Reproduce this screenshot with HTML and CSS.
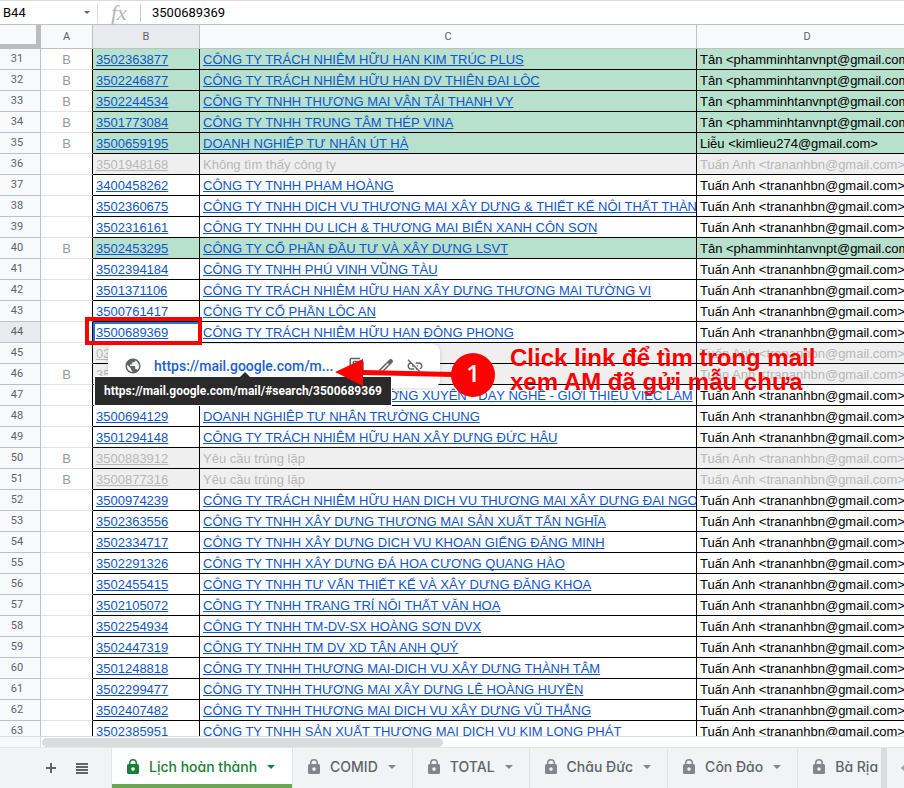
FILE: index.html
```html
<!DOCTYPE html>
<html lang="vi">
<head>
<meta charset="utf-8">
<title>Lịch hoàn thành</title>
<link rel="stylesheet" href="styles.css">
</head>
<body>
<svg class="defs" aria-hidden="true">
  <symbol id="lock" viewBox="0 0 12 16"><path fill-rule="evenodd" d="M1.500 5H2V4a4 4 0 0 1 8 0v1h.5A1.500 1.500 0 0 1 12 6.500v7a1.500 1.500 0 0 1-1.500 1.500h-9A1.500 1.500 0 0 1 0 13.500v-7A1.500 1.500 0 0 1 1.500 5zM3.500 5h5V4a2.500 2.500 0 0 0-5 0zM6 8.300a1.800 1.800 0 1 0 0 3.600 1.800 1.800 0 0 0 0-3.600z"/></symbol>
  <symbol id="caret" viewBox="0 0 8 4"><path d="M0 0h8L4 4z"/></symbol>
</svg>
<div class="formula-bar">
  <label class="name-box"><input type="text" value="B44" aria-label="Name box"><svg class="small-caret"><use href="#caret"/></svg></label>
  <span class="fx">fx</span>
  <input class="formula" type="text" value="3500689369" aria-label="Formula">
</div>
<main class="viewport">
<table class="sheet">
<colgroup><col class="c-head"><col class="c-a"><col class="c-b"><col class="c-c"><col class="c-d"></colgroup>
<thead><tr><th class="corner"></th><th>A</th><th class="active">B</th><th>C</th><th>D</th></tr></thead>
<tbody>
<tr class="green"><th>31</th><td>B</td><td><a href="#">3502363877</a></td><td><a href="#">CÔNG TY TRÁCH NHIỆM HỮU HẠN KIM TRÚC PLUS</a></td><td>Tân &lt;phamminhtanvnpt@gmail.com&gt;</td></tr>
<tr class="green"><th>32</th><td>B</td><td><a href="#">3502246877</a></td><td><a href="#">CÔNG TY TRÁCH NHIỆM HỮU HẠN DV THIÊN ĐẠI LỘC</a></td><td>Tân &lt;phamminhtanvnpt@gmail.com&gt;</td></tr>
<tr class="green"><th>33</th><td>B</td><td><a href="#">3502244534</a></td><td><a href="#">CÔNG TY TNHH THƯƠNG MẠI VẬN TẢI THANH VY</a></td><td>Tân &lt;phamminhtanvnpt@gmail.com&gt;</td></tr>
<tr class="green"><th>34</th><td>B</td><td><a href="#">3501773084</a></td><td><a href="#">CÔNG TY TNHH TRUNG TÂM THÉP VINA</a></td><td>Tân &lt;phamminhtanvnpt@gmail.com&gt;</td></tr>
<tr class="green"><th>35</th><td>B</td><td><a href="#">3500659195</a></td><td><a href="#">DOANH NGHIỆP TƯ NHÂN ÚT HÀ</a></td><td>Liễu &lt;kimlieu274@gmail.com&gt;</td></tr>
<tr class="gray"><th>36</th><td></td><td><a href="#">3501948168</a></td><td>Không tìm thấy công ty</td><td>Tuấn Anh &lt;trananhbn@gmail.com&gt;</td></tr>
<tr><th>37</th><td></td><td><a href="#">3400458262</a></td><td><a href="#">CÔNG TY TNHH PHẠM HOÀNG</a></td><td>Tuấn Anh &lt;trananhbn@gmail.com&gt;</td></tr>
<tr><th>38</th><td></td><td><a href="#">3502360675</a></td><td><a href="#">CÔNG TY TNHH DỊCH VỤ THƯƠNG MẠI XÂY DỰNG &amp; THIẾT KẾ NỘI THẤT THÀNH</a></td><td>Tuấn Anh &lt;trananhbn@gmail.com&gt;</td></tr>
<tr><th>39</th><td></td><td><a href="#">3502316161</a></td><td><a href="#">CÔNG TY TNHH DU LỊCH &amp; THƯƠNG MẠI BIỂN XANH CÔN SƠN</a></td><td>Tuấn Anh &lt;trananhbn@gmail.com&gt;</td></tr>
<tr class="green"><th>40</th><td>B</td><td><a href="#">3502453295</a></td><td><a href="#">CÔNG TY CỔ PHẦN ĐẦU TƯ VÀ XÂY DỰNG LSVT</a></td><td>Tân &lt;phamminhtanvnpt@gmail.com&gt;</td></tr>
<tr><th>41</th><td></td><td><a href="#">3502394184</a></td><td><a href="#">CÔNG TY TNHH PHÚ VINH VŨNG TÀU</a></td><td>Tuấn Anh &lt;trananhbn@gmail.com&gt;</td></tr>
<tr><th>42</th><td></td><td><a href="#">3501371106</a></td><td><a href="#">CÔNG TY TRÁCH NHIỆM HỮU HẠN XÂY DỰNG THƯƠNG MẠI TƯỜNG VI</a></td><td>Tuấn Anh &lt;trananhbn@gmail.com&gt;</td></tr>
<tr><th>43</th><td></td><td><a href="#">3500761417</a></td><td><a href="#">CÔNG TY CỔ PHẦN LỘC AN</a></td><td>Tuấn Anh &lt;trananhbn@gmail.com&gt;</td></tr>
<tr><th class="active">44</th><td></td><td class="selected"><a href="#">3500689369</a></td><td><a href="#">CÔNG TY TRÁCH NHIỆM HỮU HẠN ĐÔNG PHONG</a></td><td>Tuấn Anh &lt;trananhbn@gmail.com&gt;</td></tr>
<tr class="gray"><th>45</th><td></td><td><a href="#">03</a></td><td></td><td>Tuấn Anh &lt;trananhbn@gmail.com&gt;</td></tr>
<tr class="gray"><th>46</th><td>B</td><td><a href="#">35</a></td><td></td><td>Tuấn Anh &lt;trananhbn@gmail.com&gt;</td></tr>
<tr><th>47</th><td></td><td></td><td><a href="#">TRUNG TÂM - GIÁO DỤC THƯỜNG XUYÊN - DẠY NGHỀ - GIỚI THIỆU VIỆC LÀM</a></td><td>Tuấn Anh &lt;trananhbn@gmail.com&gt;</td></tr>
<tr><th>48</th><td></td><td><a href="#">3500694129</a></td><td><a href="#">DOANH NGHIỆP TƯ NHÂN TRƯỜNG CHUNG</a></td><td>Tuấn Anh &lt;trananhbn@gmail.com&gt;</td></tr>
<tr><th>49</th><td></td><td><a href="#">3501294148</a></td><td><a href="#">CÔNG TY TRÁCH NHIỆM HỮU HẠN XÂY DỰNG ĐỨC HẬU</a></td><td>Tuấn Anh &lt;trananhbn@gmail.com&gt;</td></tr>
<tr class="gray"><th>50</th><td>B</td><td><a href="#">3500883912</a></td><td>Yêu cầu trùng lặp</td><td>Tuấn Anh &lt;trananhbn@gmail.com&gt;</td></tr>
<tr class="gray"><th>51</th><td>B</td><td><a href="#">3500877316</a></td><td>Yêu cầu trùng lặp</td><td>Tuấn Anh &lt;trananhbn@gmail.com&gt;</td></tr>
<tr><th>52</th><td></td><td><a href="#">3500974239</a></td><td><a href="#">CÔNG TY TRÁCH NHIỆM HỮU HẠN DỊCH VỤ THƯƠNG MẠI XÂY DỰNG ĐẠI NGỌC</a></td><td>Tuấn Anh &lt;trananhbn@gmail.com&gt;</td></tr>
<tr><th>53</th><td></td><td><a href="#">3502363556</a></td><td><a href="#">CÔNG TY TNHH XÂY DỰNG THƯƠNG MẠI SẢN XUẤT TẤN NGHĨA</a></td><td>Tuấn Anh &lt;trananhbn@gmail.com&gt;</td></tr>
<tr><th>54</th><td></td><td><a href="#">3502334717</a></td><td><a href="#">CÔNG TY TNHH XÂY DỰNG DỊCH VỤ KHOAN GIẾNG ĐĂNG MINH</a></td><td>Tuấn Anh &lt;trananhbn@gmail.com&gt;</td></tr>
<tr><th>55</th><td></td><td><a href="#">3502291326</a></td><td><a href="#">CÔNG TY TNHH XÂY DỰNG ĐÁ HOA CƯƠNG QUANG HÀO</a></td><td>Tuấn Anh &lt;trananhbn@gmail.com&gt;</td></tr>
<tr><th>56</th><td></td><td><a href="#">3502455415</a></td><td><a href="#">CÔNG TY TNHH TƯ VẤN THIẾT KẾ VÀ XÂY DỰNG ĐĂNG KHOA</a></td><td>Tuấn Anh &lt;trananhbn@gmail.com&gt;</td></tr>
<tr><th>57</th><td></td><td><a href="#">3502105072</a></td><td><a href="#">CÔNG TY TNHH TRANG TRÍ NỘI THẤT VĂN HOA</a></td><td>Tuấn Anh &lt;trananhbn@gmail.com&gt;</td></tr>
<tr><th>58</th><td></td><td><a href="#">3502254934</a></td><td><a href="#">CÔNG TY TNHH TM-DV-SX HOÀNG SƠN DVX</a></td><td>Tuấn Anh &lt;trananhbn@gmail.com&gt;</td></tr>
<tr><th>59</th><td></td><td><a href="#">3502447319</a></td><td><a href="#">CÔNG TY TNHH TM DV XD TÂN ANH QUÝ</a></td><td>Tuấn Anh &lt;trananhbn@gmail.com&gt;</td></tr>
<tr><th>60</th><td></td><td><a href="#">3501248818</a></td><td><a href="#">CÔNG TY TNHH THƯƠNG MẠI-DỊCH VỤ XÂY DỰNG THÀNH TÂM</a></td><td>Tuấn Anh &lt;trananhbn@gmail.com&gt;</td></tr>
<tr><th>61</th><td></td><td><a href="#">3502299477</a></td><td><a href="#">CÔNG TY TNHH THƯƠNG MẠI XÂY DỰNG LÊ HOÀNG HUYỀN</a></td><td>Tuấn Anh &lt;trananhbn@gmail.com&gt;</td></tr>
<tr><th>62</th><td></td><td><a href="#">3502407482</a></td><td><a href="#">CÔNG TY TNHH THƯƠNG MẠI DỊCH VỤ XÂY DỰNG VŨ THẮNG</a></td><td>Tuấn Anh &lt;trananhbn@gmail.com&gt;</td></tr>
<tr><th>63</th><td></td><td><a href="#">3502385951</a></td><td><a href="#">CÔNG TY TNHH SẢN XUẤT THƯƠNG MẠI DỊCH VỤ KIM LONG PHÁT</a></td><td>Tuấn Anh &lt;trananhbn@gmail.com&gt;</td></tr>
</tbody>
</table>
<div class="link-card">
  <svg class="globe" viewBox="0 0 24 24"><path d="M12 2C6.480 2 2 6.480 2 12s4.480 10 10 10 10-4.480 10-10S17.520 2 12 2zm-1 17.930c-3.950-.49-7-3.850-7-7.930 0-.62.08-1.210.21-1.790L9 15v1c0 1.100.9 2 2 2v1.930zm6.900-2.540c-.26-.81-1-1.390-1.900-1.390h-1v-3c0-.55-.45-1-1-1H8v-2h2c.55 0 1-.45 1-1V7h2c1.100 0 2-.9 2-2v-.41c2.930 1.190 5 4.060 5 7.410 0 2.080-.8 3.970-2.100 5.390z"/></svg>
  <a href="#">https://mail.google.com/m...</a>
  <button aria-label="Copy"><svg viewBox="0 0 24 24"><path d="M16 1H4a2 2 0 0 0-2 2v14h2V3h12V1zm3 4H8a2 2 0 0 0-2 2v14a2 2 0 0 0 2 2h11a2 2 0 0 0 2-2V7a2 2 0 0 0-2-2zm0 16H8V7h11v14z"/></svg></button>
  <button aria-label="Edit"><svg viewBox="0 0 24 24"><path fill-rule="evenodd" d="M20.400 3.600a3 3 0 0 0-4.200 0L3 16.800V21h4.200L20.400 7.800a3 3 0 0 0 0-4.200zM6.400 19H5v-1.400l9.600-9.600L16 9.400z"/></svg></button>
  <button aria-label="Unlink"><svg viewBox="0 0 24 24"><path d="M17 7h-4v1.900h4c1.710 0 3.100 1.390 3.100 3.100 0 1.430-.98 2.630-2.310 2.980l1.460 1.460C20.880 15.610 22 13.950 22 12c0-2.760-2.240-5-5-5zm-1 4h-2.190l2 2H16v-2zM2 4.270l3.110 3.110C3.290 8.120 2 9.910 2 12c0 2.760 2.240 5 5 5h4v-1.900H7c-1.710 0-3.100-1.390-3.100-3.100 0-1.590 1.210-2.900 2.760-3.070L8.730 11H8v2h2.730L13 15.270V17h1.730l4.010 4L20 19.740 3.270 3 2 4.270z"/></svg></button>
</div>
<div class="tooltip">https://mail.google.com/mail/#search/3500689369</div>
<div class="mark-box"></div>
<svg class="mark-arrow" viewBox="0 0 118 28"><path d="M0 13 28 0v11l90 2v5l-90-2v11z"/></svg>
<div class="mark-number">1</div>
<p class="mark-text">Click link để tìm trong mail<br>xem AM đã gửi mẫu chưa</p>
</main>
<div class="scroll-row"><div class="scroll-track"><div class="scroll-thumb"></div></div></div>
<nav class="tabs">
  <button class="tool" aria-label="Add sheet"><svg viewBox="0 0 12 12"><path d="M5 1h2v4h4v2H7v4H5V7H1V5h4z"/></svg></button>
  <button class="tool" aria-label="All sheets"><svg viewBox="0 0 12 12"><path d="M0 1h12v2H0zM0 4h12v2H0zM0 7h12v2H0zM0 10h12v2H0z"/></svg></button>
  <div class="tab-list">
    <button class="tab current"><svg class="lock"><use href="#lock"/></svg>Lịch hoàn thành<svg class="caret"><use href="#caret"/></svg></button>
    <button class="tab"><svg class="lock"><use href="#lock"/></svg>COMID<svg class="caret"><use href="#caret"/></svg></button>
    <button class="tab"><svg class="lock"><use href="#lock"/></svg>TOTAL<svg class="caret"><use href="#caret"/></svg></button>
    <button class="tab"><svg class="lock"><use href="#lock"/></svg>Châu Đức<svg class="caret"><use href="#caret"/></svg></button>
    <button class="tab"><svg class="lock"><use href="#lock"/></svg>Côn Đảo<svg class="caret"><use href="#caret"/></svg></button>
    <button class="tab"><svg class="lock"><use href="#lock"/></svg>Bà Rịa<svg class="caret"><use href="#caret"/></svg></button>
  </div>
  <button class="tab-scroll" aria-label="Scroll tabs"><svg viewBox="0 0 4 8"><path d="M4 0v8L0 4z"/></svg></button>
</nav>
</body>
</html>
```
FILE: styles.css
```css
* { box-sizing: border-box; }
body {
  margin: 0;
  height: 100vh;
  display: flex;
  flex-direction: column;
  overflow: hidden;
  background: #fff;
  color: #000;
  font: 13px/20px Roboto, "Liberation Sans", sans-serif;
}
button { border: 0; padding: 0; background: none; font: inherit; color: inherit; }
.defs { display: none; }

.formula-bar {
  flex: none;
  height: 25px;
  display: flex;
  align-items: center;
  border-top: 1px solid #dadce0;
  border-bottom: 1px solid #c0c0c0;
}
.formula-bar input { border: 0; padding: 0; background: none; font: inherit; color: inherit; outline: 0; }
.name-box {
  display: flex;
  align-items: center;
  width: 98px;
  padding: 0 7px 0 3px;
  border-right: 1px solid #dadce0;
}
.name-box input { flex: 1; min-width: 0; }
.small-caret { width: 6px; height: 3px; fill: #666; }
.fx {
  width: 43px;
  padding-left: 13px;
  border-right: 1px solid #c8c8c8;
  color: #b4b4b4;
  font: italic 22px/18px "Liberation Serif", serif;
}
.formula-bar .formula { flex: 1; padding-left: 11px; }

.viewport { position: relative; flex: 1; min-height: 0; overflow: hidden; }
.sheet { width: max(918px, 100%); table-layout: fixed; border-collapse: separate; border-spacing: 0; }
.c-head { width: 41px; }
.c-a { width: 52px; }
.c-b { width: 107px; }
.c-c { width: 497px; }
.sheet th, .sheet td { padding: 0; overflow: hidden; white-space: nowrap; }
.sheet th {
  border-right: 1px solid #c0c0c0;
  border-bottom: 1px solid #c0c0c0;
  background: #f8f9fa;
  color: #5f6368;
  font-size: 11px;
  font-weight: 400;
}
thead th { height: 24px; }
.sheet .corner { border-right: 5px solid #bcbcbc; border-bottom: 5px solid #bcbcbc; }
.sheet .active { background: #e8eaed; }
.sheet tbody th { line-height: 20px; padding-right: 6px; }
.sheet td {
  height: 21px;
  padding: 2px 0 0 3px;
  border-right: 1px solid #000;
  border-bottom: 1px solid #000;
  font-family: "Liberation Sans", sans-serif;
  line-height: 18px;
}
.sheet td:nth-child(2) { padding-left: 0; border-bottom-color: #e2e3e3; color: #999; text-align: center; }
.sheet a { color: #15c; text-decoration: underline; text-decoration-skip-ink: none; }
.green td:nth-child(n+3) { background: #b7e1cd; }
.gray td:nth-child(n+3) { background: #efefef; color: #b7b7b7; }
.sheet .gray a { color: #b7b7b7; }
.sheet .selected { box-shadow: inset 2px 2px #1a73e8, inset -1px -1px #1a73e8; }

.link-card {
  position: absolute;
  left: 108px;
  top: 319px;
  width: 332px;
  height: 44px;
  display: flex;
  align-items: center;
  padding: 0 16px;
  border-radius: 8px;
  background: #fff;
  box-shadow: 0 1px 4px rgba(60, 64, 67, .2);
}
.link-card svg { display: block; width: 18px; height: 18px; fill: #5f6368; }
.link-card a { flex: 1; margin-left: 12px; color: #1a5fcf; font-size: 14px; font-weight: 500; text-decoration: none; }
.link-card button { margin-left: 11px; }
.tooltip {
  position: absolute;
  left: 94px;
  top: 351px;
  padding: 4px 9px;
  border: 1px solid #fff;
  background: #2a2a2a;
  background-clip: padding-box;
  color: #fff;
  font-size: 12px;
  font-weight: 700;
}
.tooltip::before {
  content: "";
  position: absolute;
  left: 145px;
  top: -5px;
  border: 5px solid transparent;
  border-top: 0;
  border-bottom-color: #2a2a2a;
}
.mark-box { position: absolute; left: 85px; top: 292px; width: 117px; height: 28px; border: 4px solid #fe0000; }
.mark-arrow { position: absolute; left: 335px; top: 334px; width: 118px; height: 28px; fill: #fe0000; }
.mark-number {
  position: absolute;
  left: 451px;
  top: 328px;
  width: 44px;
  height: 44px;
  border-radius: 50%;
  background: #fe0000;
  color: #fff;
  font: 600 24px/40px "Open Sans", sans-serif;
  text-align: center;
}
.mark-text {
  position: absolute;
  left: 510px;
  top: 321px;
  margin: 0;
  color: #fe0000;
  font: 700 24px/24px "Liberation Sans", sans-serif;
  white-space: nowrap;
}

.scroll-row { flex: none; height: 12px; padding-left: 40px; border-top: 1px solid #dadce0; border-bottom: 1px solid #e4e6e8; background: #f8f9fa; }
.scroll-track { height: 10px; padding: 1px; border-left: 1px solid #dadce0; background: #fff; }
.scroll-thumb { width: 401px; max-width: 100%; height: 9px; border-radius: 5px; background: #dadce0; }

.tabs { flex: none; height: 40px; display: flex; background: #f1f3f4; color: #5f6368; }
.tool { width: 12px; margin-left: 19px; }
.tool:first-child { margin-left: 45px; }
.tool svg { display: block; width: 12px; height: 12px; fill: #5f6368; }
.tab-list { flex: 1; min-width: 0; display: flex; margin-left: 23px; overflow: hidden; }
.tab {
  flex: none;
  display: flex;
  align-items: center;
  gap: 10px;
  padding: 0 16px 2px 15px;
  border-right: 1px solid #e2e4e6;
  font: 500 14px/20px Inter, sans-serif;
  font-feature-settings: "cv11";
}
.tab.current { padding-right: 17px; border-left: 1px solid #e2e4e6; background: #fff; color: #188038; box-shadow: inset 0 -4px #6aa84f; }
.lock { width: 12px; height: 16px; fill: #80868b; }
.caret { width: 8px; height: 4px; fill: #80868b; }
.current svg { fill: #188038; }
.tab-scroll { width: 23px; border-left: 6px solid #dadce0; padding-left: 14px; overflow: hidden; }
.tab-scroll svg { display: block; width: 4px; height: 8px; fill: #9aa0a6; }
```
